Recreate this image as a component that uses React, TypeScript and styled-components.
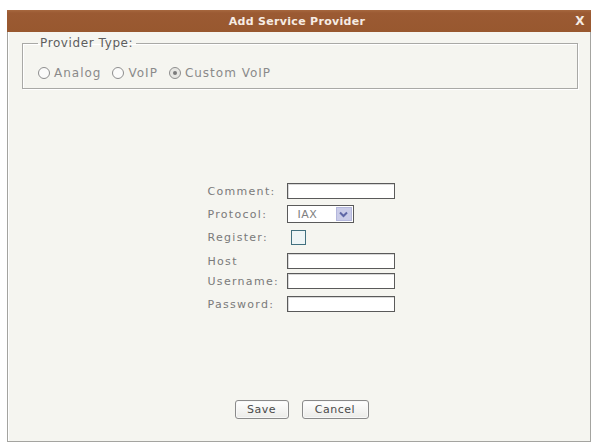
import styled, { createGlobalStyle } from "styled-components";

const GlobalStyle = createGlobalStyle`
  html, body {
    margin: 0;
    padding: 0;
    background: #ffffff;
  }
  body {
    font-family: "DejaVu Sans", Verdana, sans-serif;
  }
`;

const Page = styled.div`
  width: 593px;
  height: 443px;
  padding: 10px 2px 0 7px;
  box-sizing: border-box;
`;

const Dialog = styled.div`
  display: flex;
  flex-direction: column;
  width: 584px;
  height: 432px;
`;

const TitleBar = styled.div`
  display: flex;
  align-items: center;
  height: 22px;
  background: linear-gradient(#a7683f 0, #9b5a33 3px, #98582f 100%);
  color: #f6ece4;
  font-size: 11px;
  font-weight: bold;
  letter-spacing: 0.3px;
`;

const Title = styled.div`
  flex: 1;
  text-align: center;
  padding-left: 14px;
`;

const Close = styled.div`
  width: 14px;
  padding-right: 4px;
  font-size: 12px;
  text-align: center;
`;

const Body = styled.div`
  flex: 1;
  display: flex;
  flex-direction: column;
  background: #f5f5f0;
  border: 1px solid #a4a4a0;
  border-top: none;
  box-shadow: inset 1px 0 0 #ffffff;
  padding: 4px 12px 0 14px;
`;

const Group = styled.fieldset`
  margin: 0;
  padding: 16px 12px 8px 15px;
  border: 1px solid #a9a9a6;
  box-shadow: inset 1px 1px 0 #ffffff, 1px 1px 0 #ffffff;
`;

const Legend = styled.legend`
  padding: 0 3px 0 2px;
  font-size: 12px;
  line-height: 14px;
  letter-spacing: 0.6px;
  color: #5e5e5e;
`;

const RadioRow = styled.div`
  display: flex;
  align-items: center;
  height: 14px;
`;

const RadioOption = styled.label`
  display: flex;
  align-items: center;
  gap: 4px;
  margin-right: 11px;
  font-size: 12px;
  letter-spacing: 1px;
  color: #8a8a8a;
`;

const RadioDot = styled.span<{ checked?: boolean }>`
  position: relative;
  width: 10px;
  height: 10px;
  border: 1px solid #8e8e8e;
  border-radius: 50%;
  background: ${(p) => (p.checked ? "#e6e6e2" : "#fbfbfa")};

  &::after {
    content: "";
    display: ${(p) => (p.checked ? "block" : "none")};
    position: absolute;
    left: 3px;
    top: 3px;
    width: 4px;
    height: 4px;
    border-radius: 50%;
    background: #7a7a7a;
  }
`;

const Form = styled.div`
  display: flex;
  flex-direction: column;
  align-self: center;
  margin-top: 94px;
  margin-left: 2px;
`;

const Row = styled.div<{ gap: number }>`
  display: flex;
  align-items: center;
  margin-bottom: ${(p) => p.gap}px;
`;

const Label = styled.div`
  width: 79px;
  font-size: 11px;
  letter-spacing: 1.3px;
  color: #7a7a7a;
`;

const TextBox = styled.div`
  width: 106px;
  height: 14px;
  background: #ffffff;
  border: 1px solid #5a5a5a;
  box-shadow: inset 1px 1px 0 #d8d8d8;
`;

const Select = styled.div`
  display: flex;
  align-items: center;
  justify-content: space-between;
  width: 54px;
  height: 16px;
  padding: 0 1px 0 10px;
  background: #ffffff;
  border: 1px solid #5a5a5a;
  font-size: 11px;
  letter-spacing: 0.5px;
  color: #7e7e7e;
`;

const SelectArrow = styled.div`
  display: flex;
  align-items: center;
  justify-content: center;
  width: 16px;
  height: 14px;
  background: #cacce8;
  border: 1px solid #b4b7dc;
  box-sizing: border-box;
`;

const CheckBox = styled.div`
  width: 13px;
  height: 13px;
  margin-left: 4px;
  background: #eef5f6;
  border: 1px solid #41707f;
`;

const Footer = styled.div`
  display: flex;
  justify-content: center;
  gap: 13px;
  margin-top: auto;
  padding: 0 0 22px 3px;
`;

const Button = styled.button<{ w: number }>`
  width: ${(p) => p.w}px;
  height: 19px;
  padding: 0;
  border: 1px solid #8a8a8a;
  border-radius: 3px;
  background: linear-gradient(#ffffff, #ebebe8);
  box-shadow: inset 0 0 0 1px #f8f8f8;
  font-family: "DejaVu Sans", Verdana, sans-serif;
  font-size: 11px;
  letter-spacing: 0.5px;
  color: #4a4a4a;
`;

const fields = [
  { label: "Comment:", kind: "text", gap: 6 },
  { label: "Protocol:", kind: "select", gap: 7 },
  { label: "Register:", kind: "check", gap: 8 },
  { label: "Host", kind: "text", gap: 4 },
  { label: "Username:", kind: "text", gap: 7 },
  { label: "Password:", kind: "text", gap: 0 },
];

export default function App() {
  return (
    <Page>
      <GlobalStyle />
      <Dialog>
        <TitleBar>
          <Title>Add Service Provider</Title>
          <Close>X</Close>
        </TitleBar>
        <Body>
          <Group>
            <Legend>Provider Type:</Legend>
            <RadioRow>
              <RadioOption>
                <RadioDot />
                Analog
              </RadioOption>
              <RadioOption>
                <RadioDot />
                VoIP
              </RadioOption>
              <RadioOption>
                <RadioDot checked />
                Custom VoIP
              </RadioOption>
            </RadioRow>
          </Group>
          <Form>
            {fields.map((f) => (
              <Row key={f.label} gap={f.gap}>
                <Label>{f.label}</Label>
                {f.kind === "text" && <TextBox />}
                {f.kind === "select" && (
                  <Select>
                    IAX
                    <SelectArrow>
                      <svg width="9" height="7" viewBox="0 0 9 7">
                        <path
                          d="M1 1.5 L4.5 5 L8 1.5"
                          fill="none"
                          stroke="#5f67a6"
                          strokeWidth="2"
                        />
                      </svg>
                    </SelectArrow>
                  </Select>
                )}
                {f.kind === "check" && <CheckBox />}
              </Row>
            ))}
          </Form>
          <Footer>
            <Button w={54}>Save</Button>
            <Button w={67}>Cancel</Button>
          </Footer>
        </Body>
      </Dialog>
    </Page>
  );
}
